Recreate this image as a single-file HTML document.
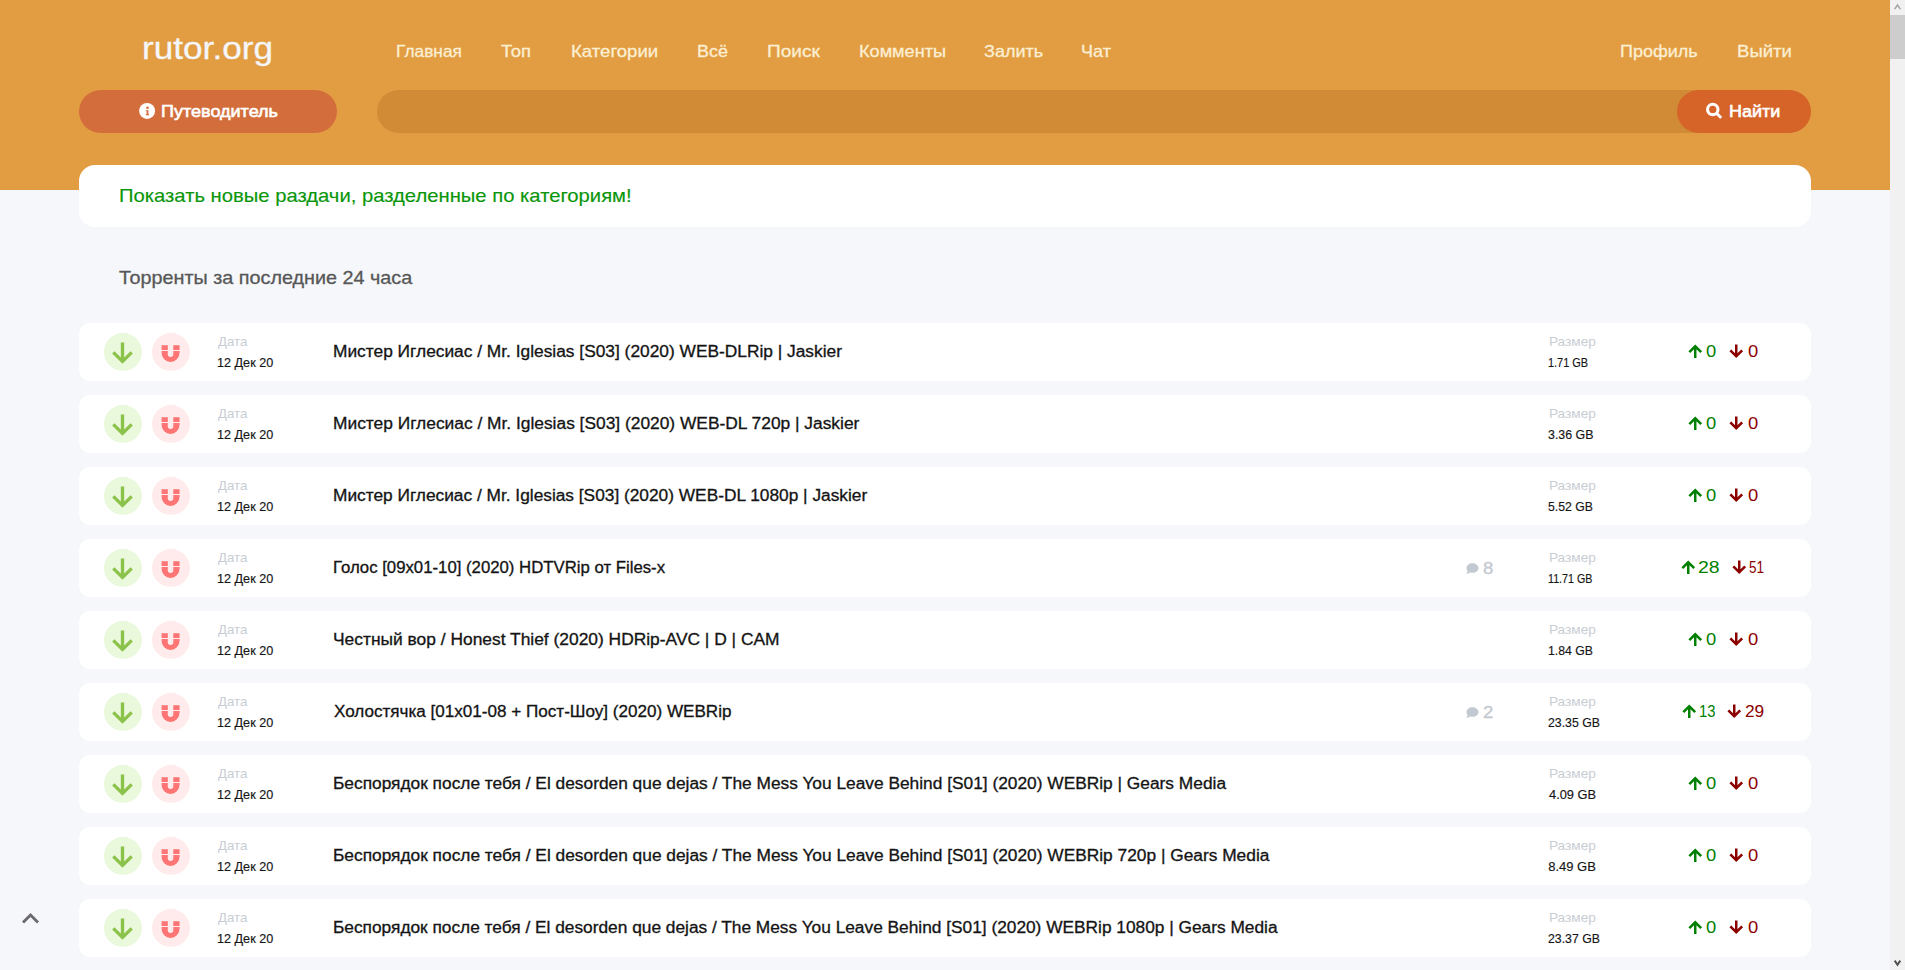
<!DOCTYPE html>
<html><head><meta charset="utf-8"><title>rutor.org</title>
<style>
*{margin:0;padding:0;box-sizing:border-box}
html,body{width:1905px;height:970px;overflow:hidden}
body{background:#F6F7FB;font-family:"Liberation Sans",sans-serif;position:relative}
.t{position:absolute;white-space:nowrap;line-height:1;font-family:"Liberation Sans",sans-serif}
.ico{position:absolute;overflow:visible}
#hdr{position:absolute;left:0;top:0;width:1890px;height:190px;background:#E29D42}
#sb{position:absolute;left:1890px;top:0;width:15px;height:970px;background:#F1F1F1}
#thumb{position:absolute;left:1890px;top:15px;width:15px;height:44px;background:#CDCDCD}
#guide{position:absolute;left:79px;top:90px;width:258px;height:43px;border-radius:21.5px;background:#D36E3C}
#search{position:absolute;left:377px;top:90px;width:1320px;height:43px;border-radius:21.5px 0 0 21.5px;background:#D18B37}
#find{position:absolute;left:1677px;top:90px;width:134px;height:43px;border-radius:21.5px;background:#D66428}
#banner{position:absolute;left:79px;top:165px;width:1732px;height:62px;border-radius:16px;background:#fff}
.row{position:absolute;left:79px;width:1732px;height:58px;background:#fff;border-radius:11px}
.c1{position:absolute;left:104px;width:38px;height:38px;border-radius:50%;background:#EAF8DB}
.c2{position:absolute;left:151.5px;width:38px;height:38px;border-radius:50%;background:#FFEBEB}
</style></head><body>
<div id="hdr"></div>
<div id="guide"></div>
<div id="search"></div>
<div id="find"></div>
<svg class="ico" style="left:139px;top:103px" width="16" height="16" viewBox="0 0 16 16"><circle cx="8.1" cy="7.95" r="8" fill="#fff"/><circle cx="8.5" cy="4.8" r="1.35" fill="#D36E3C"/><path fill="#D36E3C" d="M6.8 7.3H9.4V11.3H10.2V12.3H6.7V11.3H7.6V8.3H6.8Z"/></svg>
<svg class="ico" style="left:1705px;top:102px" width="18" height="18" viewBox="0 0 18 18"><circle cx="7.75" cy="7.4" r="5.2" fill="none" stroke="#fff" stroke-width="3.1"/><path d="M11.8 11.5L15.3 15" stroke="#fff" stroke-width="3" stroke-linecap="round"/></svg>
<div id="banner"></div>
<div class='row' style='top:323px'></div>
<div class='c1' style='top:333px'></div><div class='c2' style='top:333px'></div>
<svg class='ico' style='left:107.34px;top:337.60px' width='31' height='31' viewBox='0 0 24 24'><path fill='#8BC34A' d='M4.000 12.000 L5.768 10.232 L10.700 15.164 L10.700 3.400 L13.300 3.400 L13.300 15.164 L18.232 10.232 L20.000 12.000 L12.000 20.000Z'/></svg>
<svg class='ico' style='left:152px;top:333px' width='38' height='38' viewBox='0 0 38 38'><path fill='#FF7474' d='M9.6 12.2H15.8V17.1H9.6Z M21.3 12.2H27.55V17.1H21.3Z M9.6 17.95H15.8V21.15A2.75 2.75 0 0 0 21.3 21.15V17.95H27.55V19.925A8.975 8.975 0 0 1 9.6 19.925Z'/></svg>
<svg class='ico' style='left:1685.06px;top:340.70px' width='20.5' height='20.5' viewBox='0 0 24 24'><path fill='#008000' d='M4.000 12.000 L6.121 14.121 L10.550 9.693 L10.550 20.000 L13.450 20.000 L13.450 9.693 L17.879 14.121 L20.000 12.000 L12.000 4.000Z'/></svg>
<svg class='ico' style='left:1726.36px;top:340.70px' width='20.5' height='20.5' viewBox='0 0 24 24'><path fill='#8B0000' d='M4.000 12.000 L6.121 9.879 L10.550 14.307 L10.550 4.000 L13.450 4.000 L13.450 14.307 L17.879 9.879 L20.000 12.000 L12.000 20.000Z'/></svg>
<div class='row' style='top:395px'></div>
<div class='c1' style='top:405px'></div><div class='c2' style='top:405px'></div>
<svg class='ico' style='left:107.34px;top:409.60px' width='31' height='31' viewBox='0 0 24 24'><path fill='#8BC34A' d='M4.000 12.000 L5.768 10.232 L10.700 15.164 L10.700 3.400 L13.300 3.400 L13.300 15.164 L18.232 10.232 L20.000 12.000 L12.000 20.000Z'/></svg>
<svg class='ico' style='left:152px;top:405px' width='38' height='38' viewBox='0 0 38 38'><path fill='#FF7474' d='M9.6 12.2H15.8V17.1H9.6Z M21.3 12.2H27.55V17.1H21.3Z M9.6 17.95H15.8V21.15A2.75 2.75 0 0 0 21.3 21.15V17.95H27.55V19.925A8.975 8.975 0 0 1 9.6 19.925Z'/></svg>
<svg class='ico' style='left:1685.06px;top:412.70px' width='20.5' height='20.5' viewBox='0 0 24 24'><path fill='#008000' d='M4.000 12.000 L6.121 14.121 L10.550 9.693 L10.550 20.000 L13.450 20.000 L13.450 9.693 L17.879 14.121 L20.000 12.000 L12.000 4.000Z'/></svg>
<svg class='ico' style='left:1726.36px;top:412.70px' width='20.5' height='20.5' viewBox='0 0 24 24'><path fill='#8B0000' d='M4.000 12.000 L6.121 9.879 L10.550 14.307 L10.550 4.000 L13.450 4.000 L13.450 14.307 L17.879 9.879 L20.000 12.000 L12.000 20.000Z'/></svg>
<div class='row' style='top:467px'></div>
<div class='c1' style='top:477px'></div><div class='c2' style='top:477px'></div>
<svg class='ico' style='left:107.34px;top:481.60px' width='31' height='31' viewBox='0 0 24 24'><path fill='#8BC34A' d='M4.000 12.000 L5.768 10.232 L10.700 15.164 L10.700 3.400 L13.300 3.400 L13.300 15.164 L18.232 10.232 L20.000 12.000 L12.000 20.000Z'/></svg>
<svg class='ico' style='left:152px;top:477px' width='38' height='38' viewBox='0 0 38 38'><path fill='#FF7474' d='M9.6 12.2H15.8V17.1H9.6Z M21.3 12.2H27.55V17.1H21.3Z M9.6 17.95H15.8V21.15A2.75 2.75 0 0 0 21.3 21.15V17.95H27.55V19.925A8.975 8.975 0 0 1 9.6 19.925Z'/></svg>
<svg class='ico' style='left:1685.06px;top:484.70px' width='20.5' height='20.5' viewBox='0 0 24 24'><path fill='#008000' d='M4.000 12.000 L6.121 14.121 L10.550 9.693 L10.550 20.000 L13.450 20.000 L13.450 9.693 L17.879 14.121 L20.000 12.000 L12.000 4.000Z'/></svg>
<svg class='ico' style='left:1726.36px;top:484.70px' width='20.5' height='20.5' viewBox='0 0 24 24'><path fill='#8B0000' d='M4.000 12.000 L6.121 9.879 L10.550 14.307 L10.550 4.000 L13.450 4.000 L13.450 14.307 L17.879 9.879 L20.000 12.000 L12.000 20.000Z'/></svg>
<div class='row' style='top:539px'></div>
<div class='c1' style='top:549px'></div><div class='c2' style='top:549px'></div>
<svg class='ico' style='left:107.34px;top:553.60px' width='31' height='31' viewBox='0 0 24 24'><path fill='#8BC34A' d='M4.000 12.000 L5.768 10.232 L10.700 15.164 L10.700 3.400 L13.300 3.400 L13.300 15.164 L18.232 10.232 L20.000 12.000 L12.000 20.000Z'/></svg>
<svg class='ico' style='left:152px;top:549px' width='38' height='38' viewBox='0 0 38 38'><path fill='#FF7474' d='M9.6 12.2H15.8V17.1H9.6Z M21.3 12.2H27.55V17.1H21.3Z M9.6 17.95H15.8V21.15A2.75 2.75 0 0 0 21.3 21.15V17.95H27.55V19.925A8.975 8.975 0 0 1 9.6 19.925Z'/></svg>
<svg class='ico' style='left:1465px;top:562px' width='15' height='13' viewBox='0 0 15 13'><path fill='#C3C9D1' d='M7.5 1.2C10.8 1.2 13.5 3.3 13.5 6C13.5 8.7 10.8 10.8 7.5 10.8C6.6 10.8 5.8 10.7 5 10.4C4.2 11.1 2.9 11.8 1.2 12C1.9 11.2 2.5 10.3 2.6 9.3C1.9 8.4 1.5 7.3 1.5 6C1.5 3.3 4.2 1.2 7.5 1.2Z'/></svg>
<svg class='ico' style='left:1678.36px;top:556.70px' width='20.5' height='20.5' viewBox='0 0 24 24'><path fill='#008000' d='M4.000 12.000 L6.121 14.121 L10.550 9.693 L10.550 20.000 L13.450 20.000 L13.450 9.693 L17.879 14.121 L20.000 12.000 L12.000 4.000Z'/></svg>
<svg class='ico' style='left:1728.66px;top:556.70px' width='20.5' height='20.5' viewBox='0 0 24 24'><path fill='#8B0000' d='M4.000 12.000 L6.121 9.879 L10.550 14.307 L10.550 4.000 L13.450 4.000 L13.450 14.307 L17.879 9.879 L20.000 12.000 L12.000 20.000Z'/></svg>
<div class='row' style='top:611px'></div>
<div class='c1' style='top:621px'></div><div class='c2' style='top:621px'></div>
<svg class='ico' style='left:107.34px;top:625.60px' width='31' height='31' viewBox='0 0 24 24'><path fill='#8BC34A' d='M4.000 12.000 L5.768 10.232 L10.700 15.164 L10.700 3.400 L13.300 3.400 L13.300 15.164 L18.232 10.232 L20.000 12.000 L12.000 20.000Z'/></svg>
<svg class='ico' style='left:152px;top:621px' width='38' height='38' viewBox='0 0 38 38'><path fill='#FF7474' d='M9.6 12.2H15.8V17.1H9.6Z M21.3 12.2H27.55V17.1H21.3Z M9.6 17.95H15.8V21.15A2.75 2.75 0 0 0 21.3 21.15V17.95H27.55V19.925A8.975 8.975 0 0 1 9.6 19.925Z'/></svg>
<svg class='ico' style='left:1685.06px;top:628.70px' width='20.5' height='20.5' viewBox='0 0 24 24'><path fill='#008000' d='M4.000 12.000 L6.121 14.121 L10.550 9.693 L10.550 20.000 L13.450 20.000 L13.450 9.693 L17.879 14.121 L20.000 12.000 L12.000 4.000Z'/></svg>
<svg class='ico' style='left:1726.36px;top:628.70px' width='20.5' height='20.5' viewBox='0 0 24 24'><path fill='#8B0000' d='M4.000 12.000 L6.121 9.879 L10.550 14.307 L10.550 4.000 L13.450 4.000 L13.450 14.307 L17.879 9.879 L20.000 12.000 L12.000 20.000Z'/></svg>
<div class='row' style='top:683px'></div>
<div class='c1' style='top:693px'></div><div class='c2' style='top:693px'></div>
<svg class='ico' style='left:107.34px;top:697.60px' width='31' height='31' viewBox='0 0 24 24'><path fill='#8BC34A' d='M4.000 12.000 L5.768 10.232 L10.700 15.164 L10.700 3.400 L13.300 3.400 L13.300 15.164 L18.232 10.232 L20.000 12.000 L12.000 20.000Z'/></svg>
<svg class='ico' style='left:152px;top:693px' width='38' height='38' viewBox='0 0 38 38'><path fill='#FF7474' d='M9.6 12.2H15.8V17.1H9.6Z M21.3 12.2H27.55V17.1H21.3Z M9.6 17.95H15.8V21.15A2.75 2.75 0 0 0 21.3 21.15V17.95H27.55V19.925A8.975 8.975 0 0 1 9.6 19.925Z'/></svg>
<svg class='ico' style='left:1465px;top:706px' width='15' height='13' viewBox='0 0 15 13'><path fill='#C3C9D1' d='M7.5 1.2C10.8 1.2 13.5 3.3 13.5 6C13.5 8.7 10.8 10.8 7.5 10.8C6.6 10.8 5.8 10.7 5 10.4C4.2 11.1 2.9 11.8 1.2 12C1.9 11.2 2.5 10.3 2.6 9.3C1.9 8.4 1.5 7.3 1.5 6C1.5 3.3 4.2 1.2 7.5 1.2Z'/></svg>
<svg class='ico' style='left:1678.66px;top:700.70px' width='20.5' height='20.5' viewBox='0 0 24 24'><path fill='#008000' d='M4.000 12.000 L6.121 14.121 L10.550 9.693 L10.550 20.000 L13.450 20.000 L13.450 9.693 L17.879 14.121 L20.000 12.000 L12.000 4.000Z'/></svg>
<svg class='ico' style='left:1724.26px;top:700.70px' width='20.5' height='20.5' viewBox='0 0 24 24'><path fill='#8B0000' d='M4.000 12.000 L6.121 9.879 L10.550 14.307 L10.550 4.000 L13.450 4.000 L13.450 14.307 L17.879 9.879 L20.000 12.000 L12.000 20.000Z'/></svg>
<div class='row' style='top:755px'></div>
<div class='c1' style='top:765px'></div><div class='c2' style='top:765px'></div>
<svg class='ico' style='left:107.34px;top:769.60px' width='31' height='31' viewBox='0 0 24 24'><path fill='#8BC34A' d='M4.000 12.000 L5.768 10.232 L10.700 15.164 L10.700 3.400 L13.300 3.400 L13.300 15.164 L18.232 10.232 L20.000 12.000 L12.000 20.000Z'/></svg>
<svg class='ico' style='left:152px;top:765px' width='38' height='38' viewBox='0 0 38 38'><path fill='#FF7474' d='M9.6 12.2H15.8V17.1H9.6Z M21.3 12.2H27.55V17.1H21.3Z M9.6 17.95H15.8V21.15A2.75 2.75 0 0 0 21.3 21.15V17.95H27.55V19.925A8.975 8.975 0 0 1 9.6 19.925Z'/></svg>
<svg class='ico' style='left:1685.06px;top:772.70px' width='20.5' height='20.5' viewBox='0 0 24 24'><path fill='#008000' d='M4.000 12.000 L6.121 14.121 L10.550 9.693 L10.550 20.000 L13.450 20.000 L13.450 9.693 L17.879 14.121 L20.000 12.000 L12.000 4.000Z'/></svg>
<svg class='ico' style='left:1726.36px;top:772.70px' width='20.5' height='20.5' viewBox='0 0 24 24'><path fill='#8B0000' d='M4.000 12.000 L6.121 9.879 L10.550 14.307 L10.550 4.000 L13.450 4.000 L13.450 14.307 L17.879 9.879 L20.000 12.000 L12.000 20.000Z'/></svg>
<div class='row' style='top:827px'></div>
<div class='c1' style='top:837px'></div><div class='c2' style='top:837px'></div>
<svg class='ico' style='left:107.34px;top:841.60px' width='31' height='31' viewBox='0 0 24 24'><path fill='#8BC34A' d='M4.000 12.000 L5.768 10.232 L10.700 15.164 L10.700 3.400 L13.300 3.400 L13.300 15.164 L18.232 10.232 L20.000 12.000 L12.000 20.000Z'/></svg>
<svg class='ico' style='left:152px;top:837px' width='38' height='38' viewBox='0 0 38 38'><path fill='#FF7474' d='M9.6 12.2H15.8V17.1H9.6Z M21.3 12.2H27.55V17.1H21.3Z M9.6 17.95H15.8V21.15A2.75 2.75 0 0 0 21.3 21.15V17.95H27.55V19.925A8.975 8.975 0 0 1 9.6 19.925Z'/></svg>
<svg class='ico' style='left:1685.06px;top:844.70px' width='20.5' height='20.5' viewBox='0 0 24 24'><path fill='#008000' d='M4.000 12.000 L6.121 14.121 L10.550 9.693 L10.550 20.000 L13.450 20.000 L13.450 9.693 L17.879 14.121 L20.000 12.000 L12.000 4.000Z'/></svg>
<svg class='ico' style='left:1726.36px;top:844.70px' width='20.5' height='20.5' viewBox='0 0 24 24'><path fill='#8B0000' d='M4.000 12.000 L6.121 9.879 L10.550 14.307 L10.550 4.000 L13.450 4.000 L13.450 14.307 L17.879 9.879 L20.000 12.000 L12.000 20.000Z'/></svg>
<div class='row' style='top:899px'></div>
<div class='c1' style='top:909px'></div><div class='c2' style='top:909px'></div>
<svg class='ico' style='left:107.34px;top:913.60px' width='31' height='31' viewBox='0 0 24 24'><path fill='#8BC34A' d='M4.000 12.000 L5.768 10.232 L10.700 15.164 L10.700 3.400 L13.300 3.400 L13.300 15.164 L18.232 10.232 L20.000 12.000 L12.000 20.000Z'/></svg>
<svg class='ico' style='left:152px;top:909px' width='38' height='38' viewBox='0 0 38 38'><path fill='#FF7474' d='M9.6 12.2H15.8V17.1H9.6Z M21.3 12.2H27.55V17.1H21.3Z M9.6 17.95H15.8V21.15A2.75 2.75 0 0 0 21.3 21.15V17.95H27.55V19.925A8.975 8.975 0 0 1 9.6 19.925Z'/></svg>
<svg class='ico' style='left:1685.06px;top:916.70px' width='20.5' height='20.5' viewBox='0 0 24 24'><path fill='#008000' d='M4.000 12.000 L6.121 14.121 L10.550 9.693 L10.550 20.000 L13.450 20.000 L13.450 9.693 L17.879 14.121 L20.000 12.000 L12.000 4.000Z'/></svg>
<svg class='ico' style='left:1726.36px;top:916.70px' width='20.5' height='20.5' viewBox='0 0 24 24'><path fill='#8B0000' d='M4.000 12.000 L6.121 9.879 L10.550 14.307 L10.550 4.000 L13.450 4.000 L13.450 14.307 L17.879 9.879 L20.000 12.000 L12.000 20.000Z'/></svg>
<svg class="ico" style="left:20px;top:910px" width="22" height="16" viewBox="0 0 22 16"><path d="M3 12.5L10.5 5L18 12.5" fill="none" stroke="#6C6A6D" stroke-width="2.9"/></svg>
<div id="sb"></div><div id="thumb"></div>
<svg class="ico" style="left:1890px;top:0px" width="15" height="15" viewBox="0 0 15 15"><path d="M4.6 9.1L7.5 5L10.4 9.1" fill="none" stroke="#A3A3A3" stroke-width="1.5"/></svg>
<svg class="ico" style="left:1890px;top:955px" width="15" height="15" viewBox="0 0 15 15"><path d="M4.7 5.6L7.5 9.7L10.3 5.6" fill="none" stroke="#505050" stroke-width="2"/></svg>
<div class='t' style='left:142.07px;top:33.20px;font-size:31.5px;font-weight:400;color:#F5F6FA;-webkit-text-stroke:0.3px #F5F6FA;transform:scaleX(1.1167);transform-origin:0 0;'>rutor.org</div>
<div class='t' style='left:396.38px;top:43.30px;font-size:17px;font-weight:400;color:#FCEFD3;-webkit-text-stroke:0.3px #FCEFD3;transform:scaleX(1.0190);transform-origin:0 0;'>Главная</div>
<div class='t' style='left:500.90px;top:43.30px;font-size:17px;font-weight:400;color:#FCEFD3;-webkit-text-stroke:0.3px #FCEFD3;transform:scaleX(1.0815);transform-origin:0 0;'>Топ</div>
<div class='t' style='left:570.51px;top:43.30px;font-size:17px;font-weight:400;color:#FCEFD3;-webkit-text-stroke:0.3px #FCEFD3;transform:scaleX(1.0936);transform-origin:0 0;'>Категории</div>
<div class='t' style='left:696.85px;top:43.30px;font-size:17px;font-weight:400;color:#FCEFD3;-webkit-text-stroke:0.3px #FCEFD3;transform:scaleX(1.0536);transform-origin:0 0;'>Всё</div>
<div class='t' style='left:767.38px;top:43.30px;font-size:17px;font-weight:400;color:#FCEFD3;-webkit-text-stroke:0.3px #FCEFD3;transform:scaleX(1.1196);transform-origin:0 0;'>Поиск</div>
<div class='t' style='left:858.63px;top:43.30px;font-size:17px;font-weight:400;color:#FCEFD3;-webkit-text-stroke:0.3px #FCEFD3;transform:scaleX(1.0662);transform-origin:0 0;'>Комменты</div>
<div class='t' style='left:984.24px;top:43.30px;font-size:17px;font-weight:400;color:#FCEFD3;-webkit-text-stroke:0.3px #FCEFD3;transform:scaleX(1.0611);transform-origin:0 0;'>Залить</div>
<div class='t' style='left:1080.54px;top:43.30px;font-size:17px;font-weight:400;color:#FCEFD3;-webkit-text-stroke:0.3px #FCEFD3;transform:scaleX(1.0630);transform-origin:0 0;'>Чат</div>
<div class='t' style='left:1620.44px;top:43.30px;font-size:17px;font-weight:400;color:#FCEFD3;-webkit-text-stroke:0.3px #FCEFD3;transform:scaleX(1.0569);transform-origin:0 0;'>Профиль</div>
<div class='t' style='left:1736.71px;top:43.30px;font-size:17px;font-weight:400;color:#FCEFD3;-webkit-text-stroke:0.3px #FCEFD3;transform:scaleX(1.0917);transform-origin:0 0;'>Выйти</div>
<div class='t' style='left:161.04px;top:103.30px;font-size:17px;font-weight:400;color:#FFFFFF;-webkit-text-stroke:0.6px #FFFFFF;transform:scaleX(1.0596);transform-origin:0 0;'>Путеводитель</div>
<div class='t' style='left:1729.14px;top:103.30px;font-size:17px;font-weight:400;color:#FFFFFF;-webkit-text-stroke:0.6px #FFFFFF;transform:scaleX(1.0553);transform-origin:0 0;'>Найти</div>
<div class='t' style='left:119.11px;top:187.30px;font-size:18.5px;font-weight:400;color:#0A960A;-webkit-text-stroke:0.15px #0A960A;transform:scaleX(1.0933);transform-origin:0 0;'>Показать новые раздачи, разделенные по категориям!</div>
<div class='t' style='left:119.20px;top:268.90px;font-size:18.5px;font-weight:400;color:#575757;-webkit-text-stroke:0.3px #575757;transform:scaleX(1.0691);transform-origin:0 0;'>Торренты за последние 24 часа</div>
<div class='t' style='left:217.60px;top:335.20px;font-size:13px;font-weight:400;color:#C8CDD3;transform:scaleX(1.0172);transform-origin:0 0;'>Дата</div>
<div class='t' style='left:217.23px;top:356.20px;font-size:13px;font-weight:400;color:#141414;-webkit-text-stroke:0.15px #141414;transform:scaleX(0.9719);transform-origin:0 0;'>12 Дек 20</div>
<div class='t' style='left:332.62px;top:343.60px;font-size:16px;font-weight:400;color:#141414;-webkit-text-stroke:0.3px #141414;transform:scaleX(1.0832);transform-origin:0 0;'>Мистер Иглесиас / Mr. Iglesias [S03] (2020) WEB-DLRip | Jaskier</div>
<div class='t' style='left:1548.55px;top:335.30px;font-size:13px;font-weight:400;color:#C8CDD3;transform:scaleX(1.0465);transform-origin:0 0;'>Размер</div>
<div class='t' style='left:1548.36px;top:355.90px;font-size:13px;font-weight:400;color:#141414;-webkit-text-stroke:0.15px #141414;transform:scaleX(0.8391);transform-origin:0 0;'>1.71 GB</div>
<div class='t' style='left:1706.42px;top:344.10px;font-size:16px;font-weight:400;color:#008000;transform:scaleX(1.1500);transform-origin:0 0;'>0</div>
<div class='t' style='left:1747.92px;top:344.10px;font-size:16px;font-weight:400;color:#8B0000;transform:scaleX(1.1500);transform-origin:0 0;'>0</div>
<div class='t' style='left:217.60px;top:407.20px;font-size:13px;font-weight:400;color:#C8CDD3;transform:scaleX(1.0172);transform-origin:0 0;'>Дата</div>
<div class='t' style='left:217.23px;top:428.20px;font-size:13px;font-weight:400;color:#141414;-webkit-text-stroke:0.15px #141414;transform:scaleX(0.9719);transform-origin:0 0;'>12 Дек 20</div>
<div class='t' style='left:332.62px;top:415.60px;font-size:16px;font-weight:400;color:#141414;-webkit-text-stroke:0.3px #141414;transform:scaleX(1.0845);transform-origin:0 0;'>Мистер Иглесиас / Mr. Iglesias [S03] (2020) WEB-DL 720p | Jaskier</div>
<div class='t' style='left:1548.55px;top:407.30px;font-size:13px;font-weight:400;color:#C8CDD3;transform:scaleX(1.0465);transform-origin:0 0;'>Размер</div>
<div class='t' style='left:1548.25px;top:427.90px;font-size:13px;font-weight:400;color:#141414;-webkit-text-stroke:0.15px #141414;transform:scaleX(0.9543);transform-origin:0 0;'>3.36 GB</div>
<div class='t' style='left:1706.42px;top:416.10px;font-size:16px;font-weight:400;color:#008000;transform:scaleX(1.1500);transform-origin:0 0;'>0</div>
<div class='t' style='left:1747.92px;top:416.10px;font-size:16px;font-weight:400;color:#8B0000;transform:scaleX(1.1500);transform-origin:0 0;'>0</div>
<div class='t' style='left:217.60px;top:479.20px;font-size:13px;font-weight:400;color:#C8CDD3;transform:scaleX(1.0172);transform-origin:0 0;'>Дата</div>
<div class='t' style='left:217.23px;top:500.20px;font-size:13px;font-weight:400;color:#141414;-webkit-text-stroke:0.15px #141414;transform:scaleX(0.9719);transform-origin:0 0;'>12 Дек 20</div>
<div class='t' style='left:332.62px;top:487.60px;font-size:16px;font-weight:400;color:#141414;-webkit-text-stroke:0.3px #141414;transform:scaleX(1.0809);transform-origin:0 0;'>Мистер Иглесиас / Mr. Iglesias [S03] (2020) WEB-DL 1080p | Jaskier</div>
<div class='t' style='left:1548.55px;top:479.30px;font-size:13px;font-weight:400;color:#C8CDD3;transform:scaleX(1.0465);transform-origin:0 0;'>Размер</div>
<div class='t' style='left:1548.26px;top:499.90px;font-size:13px;font-weight:400;color:#141414;-webkit-text-stroke:0.15px #141414;transform:scaleX(0.9413);transform-origin:0 0;'>5.52 GB</div>
<div class='t' style='left:1706.42px;top:488.10px;font-size:16px;font-weight:400;color:#008000;transform:scaleX(1.1500);transform-origin:0 0;'>0</div>
<div class='t' style='left:1747.92px;top:488.10px;font-size:16px;font-weight:400;color:#8B0000;transform:scaleX(1.1500);transform-origin:0 0;'>0</div>
<div class='t' style='left:217.60px;top:551.20px;font-size:13px;font-weight:400;color:#C8CDD3;transform:scaleX(1.0172);transform-origin:0 0;'>Дата</div>
<div class='t' style='left:217.23px;top:572.20px;font-size:13px;font-weight:400;color:#141414;-webkit-text-stroke:0.15px #141414;transform:scaleX(0.9719);transform-origin:0 0;'>12 Дек 20</div>
<div class='t' style='left:332.65px;top:559.60px;font-size:16px;font-weight:400;color:#141414;-webkit-text-stroke:0.3px #141414;transform:scaleX(1.0468);transform-origin:0 0;'>Голос [09x01-10] (2020) HDTVRip от Files-x</div>
<div class='t' style='left:1548.55px;top:551.30px;font-size:13px;font-weight:400;color:#C8CDD3;transform:scaleX(1.0465);transform-origin:0 0;'>Размер</div>
<div class='t' style='left:1548.38px;top:571.90px;font-size:13px;font-weight:400;color:#141414;-webkit-text-stroke:0.15px #141414;transform:scaleX(0.8231);transform-origin:0 0;'>11.71 GB</div>
<div class='t' style='left:1482.88px;top:560.90px;font-size:16px;font-weight:400;color:#C3C9D1;-webkit-text-stroke:0.3px #C3C9D1;transform:scaleX(1.1500);transform-origin:0 0;'>8</div>
<div class='t' style='left:1698.49px;top:560.10px;font-size:16px;font-weight:400;color:#008000;transform:scaleX(1.2125);transform-origin:0 0;'>28</div>
<div class='t' style='left:1749.16px;top:560.10px;font-size:16px;font-weight:400;color:#8B0000;transform:scaleX(0.8438);transform-origin:0 0;'>51</div>
<div class='t' style='left:217.60px;top:623.20px;font-size:13px;font-weight:400;color:#C8CDD3;transform:scaleX(1.0172);transform-origin:0 0;'>Дата</div>
<div class='t' style='left:217.23px;top:644.20px;font-size:13px;font-weight:400;color:#141414;-webkit-text-stroke:0.15px #141414;transform:scaleX(0.9719);transform-origin:0 0;'>12 Дек 20</div>
<div class='t' style='left:332.61px;top:631.60px;font-size:16px;font-weight:400;color:#141414;-webkit-text-stroke:0.3px #141414;transform:scaleX(1.0866);transform-origin:0 0;'>Честный вор / Honest Thief (2020) HDRip-AVC | D | CAM</div>
<div class='t' style='left:1548.55px;top:623.30px;font-size:13px;font-weight:400;color:#C8CDD3;transform:scaleX(1.0465);transform-origin:0 0;'>Размер</div>
<div class='t' style='left:1548.26px;top:643.90px;font-size:13px;font-weight:400;color:#141414;-webkit-text-stroke:0.15px #141414;transform:scaleX(0.9413);transform-origin:0 0;'>1.84 GB</div>
<div class='t' style='left:1706.42px;top:632.10px;font-size:16px;font-weight:400;color:#008000;transform:scaleX(1.1500);transform-origin:0 0;'>0</div>
<div class='t' style='left:1747.92px;top:632.10px;font-size:16px;font-weight:400;color:#8B0000;transform:scaleX(1.1500);transform-origin:0 0;'>0</div>
<div class='t' style='left:217.60px;top:695.20px;font-size:13px;font-weight:400;color:#C8CDD3;transform:scaleX(1.0172);transform-origin:0 0;'>Дата</div>
<div class='t' style='left:217.23px;top:716.20px;font-size:13px;font-weight:400;color:#141414;-webkit-text-stroke:0.15px #141414;transform:scaleX(0.9719);transform-origin:0 0;'>12 Дек 20</div>
<div class='t' style='left:333.70px;top:703.60px;font-size:16px;font-weight:400;color:#141414;-webkit-text-stroke:0.3px #141414;transform:scaleX(1.0675);transform-origin:0 0;'>Холостячка [01x01-08 + Пост-Шоу] (2020) WEBRip</div>
<div class='t' style='left:1548.55px;top:695.30px;font-size:13px;font-weight:400;color:#C8CDD3;transform:scaleX(1.0465);transform-origin:0 0;'>Размер</div>
<div class='t' style='left:1548.25px;top:715.90px;font-size:13px;font-weight:400;color:#141414;-webkit-text-stroke:0.15px #141414;transform:scaleX(0.9453);transform-origin:0 0;'>23.35 GB</div>
<div class='t' style='left:1483.42px;top:704.90px;font-size:16px;font-weight:400;color:#C3C9D1;-webkit-text-stroke:0.3px #C3C9D1;transform:scaleX(1.1500);transform-origin:0 0;'>2</div>
<div class='t' style='left:1698.78px;top:704.10px;font-size:16px;font-weight:400;color:#008000;transform:scaleX(0.9250);transform-origin:0 0;'>13</div>
<div class='t' style='left:1744.82px;top:704.10px;font-size:16px;font-weight:400;color:#8B0000;transform:scaleX(1.0812);transform-origin:0 0;'>29</div>
<div class='t' style='left:217.60px;top:767.20px;font-size:13px;font-weight:400;color:#C8CDD3;transform:scaleX(1.0172);transform-origin:0 0;'>Дата</div>
<div class='t' style='left:217.23px;top:788.20px;font-size:13px;font-weight:400;color:#141414;-webkit-text-stroke:0.15px #141414;transform:scaleX(0.9719);transform-origin:0 0;'>12 Дек 20</div>
<div class='t' style='left:332.62px;top:775.60px;font-size:16px;font-weight:400;color:#141414;-webkit-text-stroke:0.3px #141414;transform:scaleX(1.0825);transform-origin:0 0;'>Беспорядок после тебя / El desorden que dejas / The Mess You Leave Behind [S01] (2020) WEBRip | Gears Media</div>
<div class='t' style='left:1548.55px;top:767.30px;font-size:13px;font-weight:400;color:#C8CDD3;transform:scaleX(1.0465);transform-origin:0 0;'>Размер</div>
<div class='t' style='left:1549.20px;top:787.90px;font-size:13px;font-weight:400;color:#141414;-webkit-text-stroke:0.15px #141414;transform:scaleX(0.9872);transform-origin:0 0;'>4.09 GB</div>
<div class='t' style='left:1706.42px;top:776.10px;font-size:16px;font-weight:400;color:#008000;transform:scaleX(1.1500);transform-origin:0 0;'>0</div>
<div class='t' style='left:1747.92px;top:776.10px;font-size:16px;font-weight:400;color:#8B0000;transform:scaleX(1.1500);transform-origin:0 0;'>0</div>
<div class='t' style='left:217.60px;top:839.20px;font-size:13px;font-weight:400;color:#C8CDD3;transform:scaleX(1.0172);transform-origin:0 0;'>Дата</div>
<div class='t' style='left:217.23px;top:860.20px;font-size:13px;font-weight:400;color:#141414;-webkit-text-stroke:0.15px #141414;transform:scaleX(0.9719);transform-origin:0 0;'>12 Дек 20</div>
<div class='t' style='left:332.62px;top:847.60px;font-size:16px;font-weight:400;color:#141414;-webkit-text-stroke:0.3px #141414;transform:scaleX(1.0825);transform-origin:0 0;'>Беспорядок после тебя / El desorden que dejas / The Mess You Leave Behind [S01] (2020) WEBRip 720p | Gears Media</div>
<div class='t' style='left:1548.55px;top:839.30px;font-size:13px;font-weight:400;color:#C8CDD3;transform:scaleX(1.0465);transform-origin:0 0;'>Размер</div>
<div class='t' style='left:1548.20px;top:859.90px;font-size:13px;font-weight:400;color:#141414;-webkit-text-stroke:0.15px #141414;'>8.49 GB</div>
<div class='t' style='left:1706.42px;top:848.10px;font-size:16px;font-weight:400;color:#008000;transform:scaleX(1.1500);transform-origin:0 0;'>0</div>
<div class='t' style='left:1747.92px;top:848.10px;font-size:16px;font-weight:400;color:#8B0000;transform:scaleX(1.1500);transform-origin:0 0;'>0</div>
<div class='t' style='left:217.60px;top:911.20px;font-size:13px;font-weight:400;color:#C8CDD3;transform:scaleX(1.0172);transform-origin:0 0;'>Дата</div>
<div class='t' style='left:217.23px;top:932.20px;font-size:13px;font-weight:400;color:#141414;-webkit-text-stroke:0.15px #141414;transform:scaleX(0.9719);transform-origin:0 0;'>12 Дек 20</div>
<div class='t' style='left:332.62px;top:919.60px;font-size:16px;font-weight:400;color:#141414;-webkit-text-stroke:0.3px #141414;transform:scaleX(1.0808);transform-origin:0 0;'>Беспорядок после тебя / El desorden que dejas / The Mess You Leave Behind [S01] (2020) WEBRip 1080p | Gears Media</div>
<div class='t' style='left:1548.55px;top:911.30px;font-size:13px;font-weight:400;color:#C8CDD3;transform:scaleX(1.0465);transform-origin:0 0;'>Размер</div>
<div class='t' style='left:1548.25px;top:931.90px;font-size:13px;font-weight:400;color:#141414;-webkit-text-stroke:0.15px #141414;transform:scaleX(0.9453);transform-origin:0 0;'>23.37 GB</div>
<div class='t' style='left:1706.42px;top:920.10px;font-size:16px;font-weight:400;color:#008000;transform:scaleX(1.1500);transform-origin:0 0;'>0</div>
<div class='t' style='left:1747.92px;top:920.10px;font-size:16px;font-weight:400;color:#8B0000;transform:scaleX(1.1500);transform-origin:0 0;'>0</div>
</body></html>
